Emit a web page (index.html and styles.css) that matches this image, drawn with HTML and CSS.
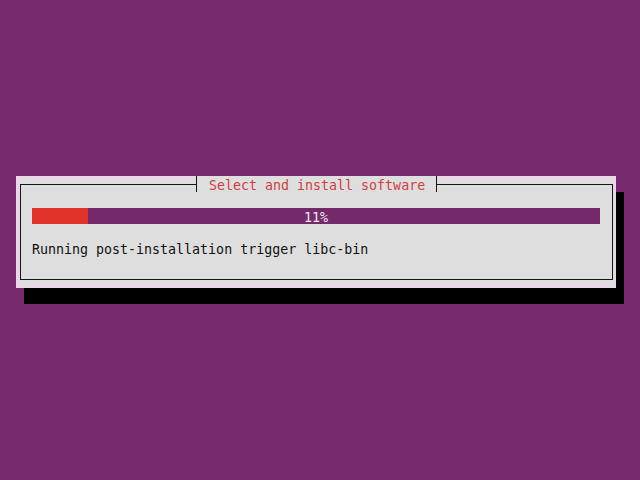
FILE: index.html
```html
<!DOCTYPE html>
<html lang="en">
<head>
<meta charset="utf-8">
<title>Select and install software</title>
<link rel="stylesheet" href="styles.css">
</head>
<body>
<div class="screen">
  <div class="dialog">
    <div class="frame">
      <div class="title">Select and install software</div>
      <div class="progress">
        <div class="progress-fill" style="width:56px"></div>
        <div class="progress-label">11%</div>
      </div>
      <div class="status">Running post-installation trigger libc-bin</div>
    </div>
  </div>
</div>
</body>
</html>
```
FILE: styles.css
```css
html, body {
  margin: 0;
  padding: 0;
  width: 640px;
  height: 480px;
  overflow: hidden;
  background: #772a6e;
}

.screen {
  display: flex;
  flex-direction: column;
  align-items: flex-start;
  padding: 176px 0 0 16px;
  font-family: "DejaVu Sans Mono", "Liberation Mono", monospace;
  font-size: 13.3px;
  line-height: 16px;
  color: #111;
}

.dialog {
  box-sizing: border-box;
  width: 600px;
  height: 112px;
  padding: 8px 3px 8px 4px;
  background: #dedede;
  box-shadow: inset 0 0 3px 2px #efd3ec, 8px 16px 0 0 #000;
}

.frame {
  position: relative;
  box-sizing: border-box;
  height: 96px;
  border: 1px solid #151515;
  padding: 23px 11px 23px 11px;
  display: flex;
  flex-direction: column;
  gap: 16px;
}

.title {
  position: absolute;
  top: -9px;
  left: 175px;
  box-sizing: border-box;
  width: 241px;
  height: 16px;
  padding: 2px 12px 0 12px;
  background: #dedede;
  border-left: 1px solid #151515;
  border-right: 1px solid #151515;
  color: #cf3f3f;
  white-space: nowrap;
}

.progress {
  position: relative;
  width: 568px;
  height: 16px;
  background: #74296b;
  display: flex;
  justify-content: center;
}

.progress-fill {
  position: absolute;
  left: 0;
  top: 0;
  height: 16px;
  background: #e2332b;
}

.progress-label {
  position: relative;
  box-sizing: border-box;
  height: 16px;
  padding-top: 2px;
  color: #ececec;
}

.status {
  box-sizing: border-box;
  height: 16px;
  padding-top: 2px;
  white-space: nowrap;
}
```
